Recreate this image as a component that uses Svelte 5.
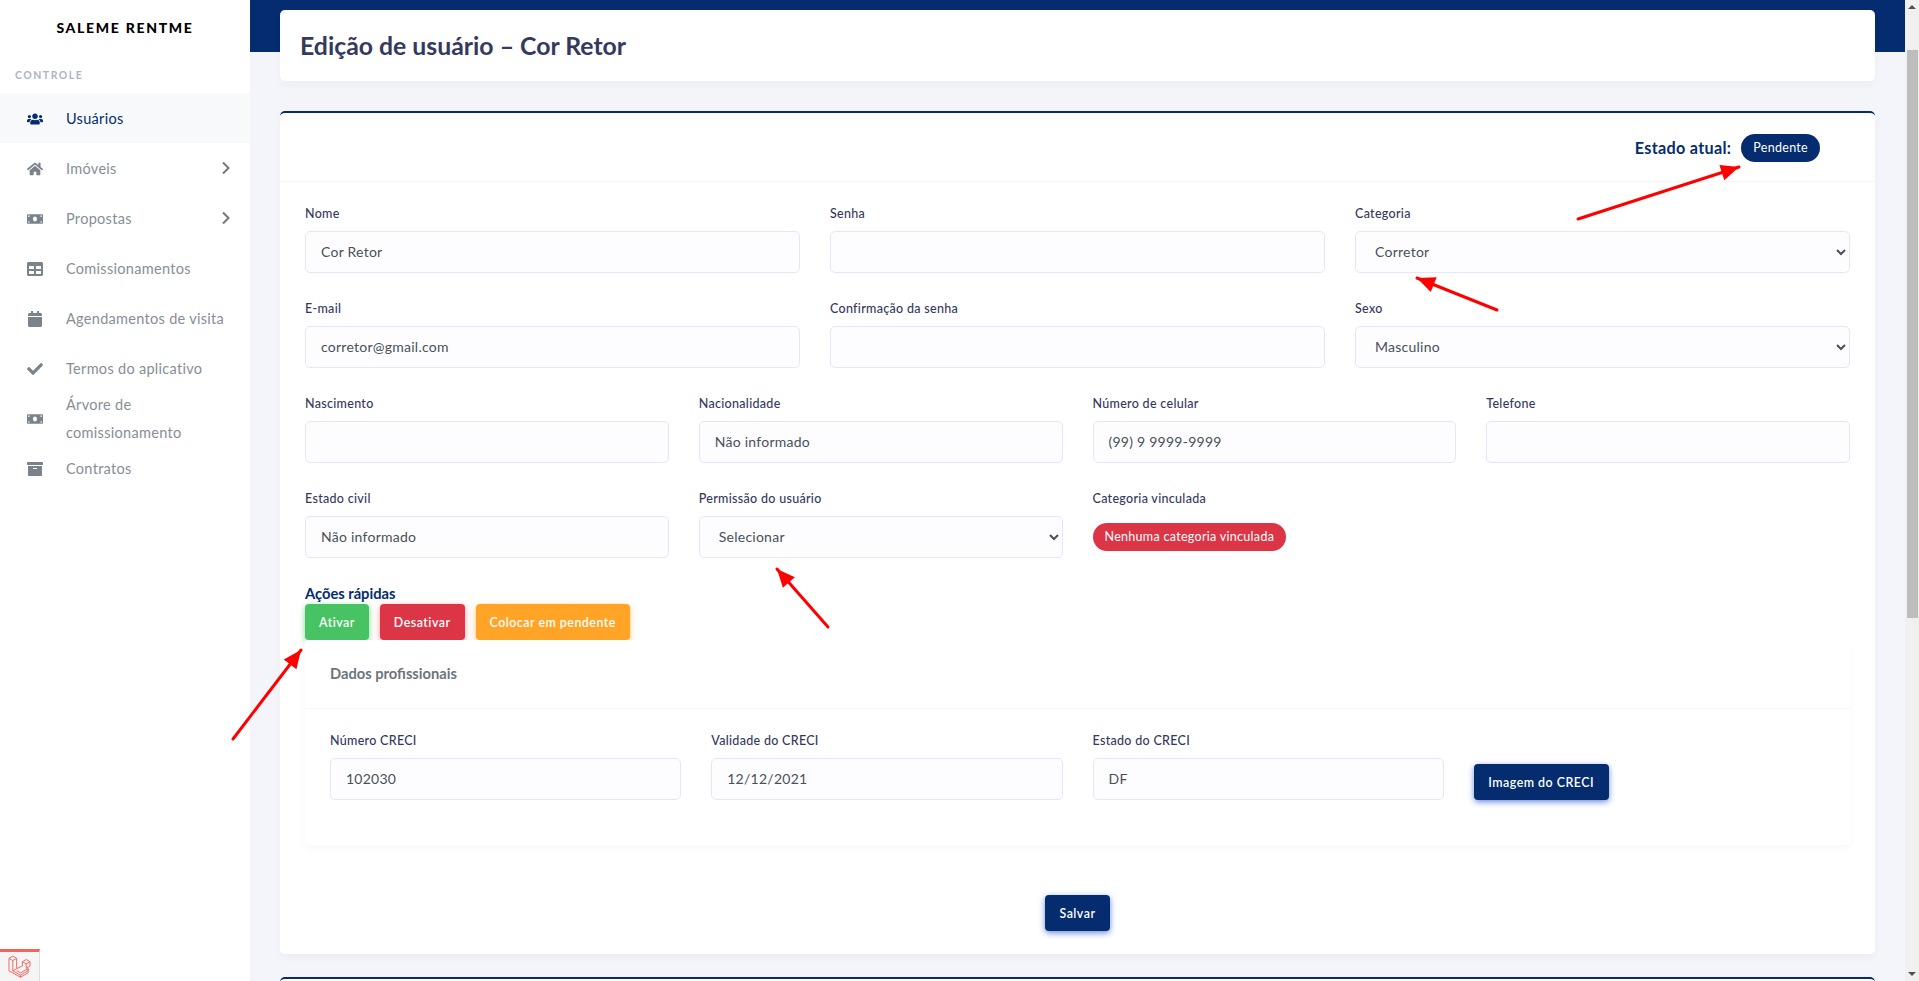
<script>
  const navIcons = {
    users: { box: '0 0 640 512', d: 'M96 224c35.3 0 64-28.7 64-64s-28.7-64-64-64-64 28.7-64 64 28.7 64 64 64zm448 0c35.3 0 64-28.7 64-64s-28.7-64-64-64-64 28.7-64 64 28.7 64 64 64zm32 32h-64c-17.6 0-33.5 7.1-45.1 18.6 40.3 22.1 68.9 62 75.1 109.4h66c17.7 0 32-14.3 32-32v-32c0-35.3-28.7-64-64-64zm-256 0c61.9 0 112-50.1 112-112S381.9 32 320 32 208 82.1 208 144s50.1 112 112 112zm76.8 32h-8.3c-20.8 10-43.9 16-68.5 16s-47.6-6-68.5-16h-8.3C179.6 288 128 339.6 128 403.2V432c0 26.5 21.5 48 48 48h288c26.5 0 48-21.5 48-48v-28.8c0-63.6-51.6-115.2-115.2-115.2zm-223.7-13.4C161.5 263.1 145.6 256 128 256H64c-35.3 0-64 28.7-64 64v32c0 17.7 14.3 32 32 32h65.9c6.3-47.4 34.9-87.3 75.2-109.4z' },
    home: { box: '0 0 576 512', d: 'M280.37 148.26L96 300.11V464a16 16 0 0 0 16 16l112.06-.29a16 16 0 0 0 15.92-16V368a16 16 0 0 1 16-16h64a16 16 0 0 1 16 16v95.64a16 16 0 0 0 16 16.05L464 480a16 16 0 0 0 16-16V300L295.67 148.26a12.19 12.19 0 0 0-15.3 0zM571.6 251.47L488 182.56V44.05a12 12 0 0 0-12-12h-56a12 12 0 0 0-12 12v72.61L318.47 43a48 48 0 0 0-61 0L4.34 251.47a12 12 0 0 0-1.6 16.9l25.5 31A12 12 0 0 0 45.15 301l235.22-193.74a12.19 12.19 0 0 1 15.3 0L530.9 301a12 12 0 0 0 16.9-1.6l25.5-31a12 12 0 0 0-1.7-16.93z' },
    money: { box: '0 0 640 512', d: 'M608 64H32C14.33 64 0 78.33 0 96v320c0 17.67 14.33 32 32 32h576c17.67 0 32-14.33 32-32V96c0-17.67-14.33-32-32-32zM48 400v-64c35.35 0 64 28.65 64 64H48zm0-224v-64h64c0 35.35-28.65 64-64 64zm272 176c-44.19 0-80-42.99-80-96 0-53.02 35.82-96 80-96s80 42.98 80 96c0 53.03-35.83 96-80 96zm272 48h-64c0-35.35 28.65-64 64-64v64zm0-224c-35.35 0-64-28.65-64-64h64v64z' },
    table: { box: '0 0 512 512', d: 'M464 32H48C21.49 32 0 53.49 0 80v352c0 26.51 21.49 48 48 48h416c26.51 0 48-21.49 48-48V80c0-26.51-21.49-48-48-48zM224 416H64v-96h160v96zm0-160H64v-96h160v96zm224 160H288v-96h160v96zm0-160H288v-96h160v96z' },
    calendar: { box: '0 0 448 512', d: 'M12 192h424c6.6 0 12 5.4 12 12v260c0 26.5-21.5 48-48 48H48c-26.5 0-48-21.5-48-48V204c0-6.6 5.4-12 12-12zm436-44v-36c0-26.5-21.5-48-48-48h-48V12c0-6.6-5.4-12-12-12h-40c-6.6 0-12 5.4-12 12v52H160V12c0-6.6-5.4-12-12-12h-40c-6.6 0-12 5.4-12 12v52H48C21.5 64 0 85.5 0 112v36c0 6.6 5.4 12 12 12h424c6.6 0 12-5.4 12-12z' },
    check: { box: '0 0 512 512', d: 'M173.898 439.404l-166.4-166.4c-9.997-9.997-9.997-26.206 0-36.204l36.203-36.204c9.997-9.998 26.207-9.998 36.204 0L192 312.69 432.095 72.596c9.997-9.997 26.207-9.997 36.204 0l36.203 36.204c9.997 9.997 9.997 26.206 0 36.204l-294.4 294.401c-9.998 9.997-26.207 9.997-36.204-.001z' },
    archive: { box: '0 0 512 512', d: 'M32 448c0 17.7 14.3 32 32 32h384c17.7 0 32-14.3 32-32V160H32v288zm160-212c0-6.6 5.4-12 12-12h104c6.6 0 12 5.4 12 12v8c0 6.6-5.4 12-12 12H204c-6.6 0-12-5.4-12-12v-8zM480 32H32C14.3 32 0 46.3 0 64v48c0 8.8 7.2 16 16 16h480c8.8 0 16-7.2 16-16V64c0-17.7-14.3-32-32-32z' }
  };

  const menu = [
    { label: 'Usuários', icon: 'users', active: true },
    { label: 'Imóveis', icon: 'home', sub: true },
    { label: 'Propostas', icon: 'money', sub: true },
    { label: 'Comissionamentos', icon: 'table' },
    { label: 'Agendamentos de visita', icon: 'calendar' },
    { label: 'Termos do aplicativo', icon: 'check' },
    { label: 'Árvore de comissionamento', icon: 'money' },
    { label: 'Contratos', icon: 'archive' }
  ];

  // red annotation arrows drawn over the screenshot: [fromX, fromY, tipX, tipY]
  const arrows = [
    [1578, 219, 1739, 167],
    [1497, 310, 1417, 278],
    [828, 627, 777, 569],
    [233, 739, 301, 650]
  ];

  const arrowHead = (a) => {
    const len = Math.hypot(a[2] - a[0], a[3] - a[1]);
    const ux = (a[2] - a[0]) / len;
    const uy = (a[3] - a[1]) / len;
    const bx = a[2] - ux * 18;
    const by = a[3] - uy * 18;
    return `${a[2]},${a[3]} ${bx - uy * 8},${by + ux * 8} ${bx + uy * 8},${by - ux * 8}`;
  };
</script>

<div class="page">
  <aside class="sidebar">
    <div class="brand">SALEME RENTME</div>
    <div class="section">CONTROLE</div>
    <nav>
      {#each menu as item}
        <div class="nav-item" class:active={item.active}>
          <svg class="nav-icon" viewBox={navIcons[item.icon].box}><path d={navIcons[item.icon].d} /></svg>
          <span class="nav-text">{item.label}</span>
          {#if item.sub}
            <svg class="chevron" viewBox="0 0 10 14"><path d="M2 1.5 7.5 7 2 12.5" /></svg>
          {/if}
        </div>
      {/each}
    </nav>
    <div class="debugbar">
      <svg viewBox="0 0 24 24" width="23" height="23">
        <path d="M1 3.500 5 1.200 9 3.500 5 5.800ZM1 3.500V16.500L13 23.200 21 18.600V14.200M9 3.500V14.200L5 16.500M5 5.800V16.500L13 21V23.200M13 21 21 16.400V14.200L13 18.700 9 16.300M9 14.200 15 11.500V7L19 4.700 23 7V11.500L19 13.800V14.200M15 7 19 9.300 23 7M19 9.300V13.800" />
      </svg>
    </div>
  </aside>

  <main class="content">
    <div class="band"></div>
    <div class="stack">
      <section class="card title-card">
        <h1>Edição de usuário – Cor Retor</h1>
      </section>

      <section class="card form-card">
        <header class="status">
          <strong>Estado atual:</strong>
          <span class="pill navy">Pendente</span>
        </header>

        <form class="form">
          <div class="grid three">
            <label class="field"><span>Nome</span><input value="Cor Retor" /></label>
            <label class="field"><span>Senha</span><input type="password" /></label>
            <label class="field"><span>Categoria</span><select><option>Corretor</option></select></label>
            <label class="field"><span>E-mail</span><input value="corretor@gmail.com" /></label>
            <label class="field"><span>Confirmação da senha</span><input type="password" /></label>
            <label class="field"><span>Sexo</span><select><option>Masculino</option></select></label>
          </div>

          <div class="grid four">
            <label class="field"><span>Nascimento</span><input /></label>
            <label class="field"><span>Nacionalidade</span><input value="Não informado" /></label>
            <label class="field"><span>Número de celular</span><input value="(99) 9 9999-9999" /></label>
            <label class="field"><span>Telefone</span><input /></label>
            <label class="field"><span>Estado civil</span><input value="Não informado" /></label>
            <label class="field"><span>Permissão do usuário</span><select><option>Selecionar</option></select></label>
            <div class="field">
              <span>Categoria vinculada</span>
              <div class="pill-row"><span class="pill red">Nenhuma categoria vinculada</span></div>
            </div>
          </div>

          <h4>Ações rápidas</h4>
          <div class="actions">
            <button type="button" class="btn green">Ativar</button>
            <button type="button" class="btn red">Desativar</button>
            <button type="button" class="btn orange">Colocar em pendente</button>
          </div>

          <section class="inner">
            <h5>Dados profissionais</h5>
            <div class="grid four inner-body">
              <label class="field"><span>Número CRECI</span><input value="102030" /></label>
              <label class="field"><span>Validade do CRECI</span><input value="12/12/2021" /></label>
              <label class="field"><span>Estado do CRECI</span><input value="DF" /></label>
              <div class="creci-btn"><button type="button" class="btn navy-btn">Imagem do CRECI</button></div>
            </div>
          </section>

          <div class="save"><button type="button" class="btn navy-btn">Salvar</button></div>
        </form>
      </section>

      <section class="card next-card"></section>
    </div>
  </main>

  <div class="scrollbar">
    <i class="up"></i>
    <div class="thumb"></div>
    <i class="down"></i>
  </div>

  <svg class="annotations" viewBox="0 0 1919 981" width="1919" height="981">
    {#each arrows as a}
      <line x1={a[0]} y1={a[1]} x2={a[2]} y2={a[3]} />
      <polygon points={arrowHead(a)} />
    {/each}
  </svg>
</div>

<style>
  :global(body) {
    margin: 0;
    overflow: hidden;
  }

  .page {
    position: relative;
    display: flex;
    width: 1919px;
    height: 981px;
    overflow: hidden;
    background: #f4f5fa;
    color: #6c757d;
    font-family: Lato, "Noto Sans", sans-serif;
    font-size: 14px;
  }

  /* sidebar */
  .sidebar {
    position: relative;
    flex: 0 0 250px;
    background: #fff;
  }

  .brand {
    margin-top: 19px;
    line-height: 18px;
    text-align: center;
    color: #000;
    font-size: 14px;
    font-weight: 900;
    letter-spacing: 1.7px;
  }

  .section {
    margin: 29px 0 0 15px;
    line-height: 18px;
    height: 18px;
    color: #adb5bd;
    font-size: 10.5px;
    font-weight: 700;
    letter-spacing: 1.5px;
  }

  nav {
    margin-top: 9px;
  }

  .nav-item {
    display: flex;
    align-items: center;
    height: 50px;
    padding-left: 27px;
    color: #868e96;
    font-size: 14.5px;
    letter-spacing: 0.3px;
  }

  .nav-item.active {
    background: #f8f9fb;
    color: #042c6f;
  }

  .nav-icon {
    flex: 0 0 16px;
    width: 16px;
    height: 16px;
    margin: 2px 23px 0 0;
    fill: #7a838c;
  }

  .active .nav-icon {
    fill: #042c6f;
  }

  .nav-text {
    flex: 0 0 165px;
    margin-top: 2px;
    line-height: 28px;
  }

  .chevron {
    width: 10px;
    height: 14px;
    margin: -1px 0 0 -10px;
    fill: none;
    stroke: #6f7880;
    stroke-width: 2;
  }

  .debugbar {
    position: absolute;
    left: 0;
    bottom: 0;
    box-sizing: border-box;
    width: 40px;
    height: 32px;
    padding: 3px 0 0 8px;
    background: #f5f5f5;
    border-top: 3px solid #f4645f;
    border-right: 1px solid #ddd;
  }

  .debugbar svg {
    fill: none;
    stroke: #f4645f;
    stroke-width: 1;
  }

  /* main column */
  .content {
    position: relative;
    flex: 1;
    min-width: 0;
  }

  .band {
    height: 52px;
    background: #042c6f;
  }

  .stack {
    display: flex;
    flex-direction: column;
    gap: 30px;
    margin-top: -42px;
    padding: 0 30px;
    position: relative;
  }

  .card {
    background: #fff;
    border-radius: 5px;
    box-shadow: 0 4px 8px rgba(26, 36, 80, 0.03);
  }

  .title-card {
    height: 71px;
    display: flex;
    align-items: center;
    padding-left: 20px;
  }

  h1 {
    margin: 0;
    color: #34395e;
    font-size: 24.8px;
    font-weight: 700;
  }

  .form-card {
    height: 841px;
    border-top: 2px solid #042c6f;
  }

  .status {
    box-sizing: border-box;
    height: 69px;
    padding: 21px 55px 0 0;
    display: flex;
    justify-content: flex-end;
    align-items: flex-start;
    gap: 10px;
    border-bottom: 1px solid #f6f6f9;
  }

  .status strong {
    color: #042c6f;
    font-size: 16.2px;
    line-height: 28px;
    letter-spacing: 0.3px;
  }

  .pill {
    display: inline-block;
    border-radius: 14px;
    line-height: 28px;
    color: #fff;
    font-size: 12.5px;
    letter-spacing: 0.3px;
    padding: 0 12px;
  }

  .pill.navy {
    background: #042c6f;
  }

  .pill.red {
    background: #dc3545;
  }

  .form {
    padding: 19px 25px 0;
  }

  .grid {
    display: grid;
    column-gap: 30px;
  }

  .three {
    grid-template-columns: repeat(3, 1fr);
  }

  .four {
    grid-template-columns: repeat(4, 1fr);
  }

  .field {
    display: block;
    height: 95px;
  }

  .field > span:first-child {
    display: block;
    height: 30px;
    line-height: 26px;
    color: #34395e;
    font-size: 12.5px;
    font-weight: 500;
    letter-spacing: 0.3px;
  }

  input,
  select {
    box-sizing: border-box;
    display: block;
    width: 100%;
    height: 42px;
    padding: 0 15px 2px;
    background-color: #fdfdff;
    border: 1px solid #e4e6fc;
    border-radius: 5px;
    color: #495057;
    font: inherit;
    font-size: 14px;
    letter-spacing: 0.25px;
    outline: none;
  }

  .pill-row {
    padding-top: 7px;
  }

  h4 {
    margin: 0;
    height: 22px;
    line-height: 22px;
    margin-top: 1px;
    color: #042c6f;
    font-size: 14.7px;
    font-weight: 700;
  }

  .actions {
    display: flex;
    gap: 11px;
    height: 36px;
  }

  .btn {
    height: 36px;
    padding: 0 14px;
    border: 0;
    border-radius: 4px;
    color: #fff;
    font: inherit;
    font-size: 12.4px;
    font-weight: 600;
    letter-spacing: 0.5px;
  }

  .btn.green {
    background: #47c363;
    box-shadow: 0 2px 6px #81d694;
  }

  .btn.red {
    background: #dc3545;
    box-shadow: 0 2px 6px #fd9b96;
  }

  .btn.orange {
    background: #ffa426;
    box-shadow: 0 2px 6px #ffc473;
  }

  .btn.navy-btn {
    padding: 0 14.5px;
    background: #042c6f;
    box-shadow: 0 2px 6px #6a8bd8;
  }

  .inner {
    position: relative;
    height: 205px;
    border-radius: 3px;
    background: #fff;
    box-shadow: 0 4px 8px rgba(26, 36, 80, 0.03);
  }

  h5 {
    box-sizing: border-box;
    margin: 0;
    height: 69px;
    padding: 23px 25px 0;
    line-height: 20px;
    color: #6c757d;
    font-size: 14.7px;
    font-weight: 700;
    border-bottom: 1px solid #f6f6f9;
  }

  .inner-body {
    padding: 19px 25px 0;
  }

  .creci-btn {
    padding-top: 36px;
  }

  .save {
    display: flex;
    justify-content: center;
    margin-top: 50px;
  }

  .next-card {
    height: 60px;
    margin-top: -7px;
    border-top: 2px solid #042c6f;
  }

  /* scrollbar stand-in, the real one is hidden in the capture */
  .scrollbar {
    position: relative;
    flex: 0 0 14px;
    background: #f0f0f0;
  }

  .thumb {
    position: absolute;
    top: 50px;
    left: 2px;
    right: 1px;
    height: 568px;
    background: #bdbdbd;
  }

  .up,
  .down {
    position: absolute;
    left: 3px;
    width: 0;
    height: 0;
    border-left: 4px solid transparent;
    border-right: 4px solid transparent;
  }

  .up {
    top: 5px;
    border-bottom: 4px solid #505050;
  }

  .down {
    bottom: 5px;
    border-top: 4px solid #505050;
  }

  .annotations {
    position: absolute;
    top: 0;
    left: 0;
    pointer-events: none;
  }

  .annotations line {
    stroke: #ff0000;
    stroke-width: 3;
    stroke-linecap: round;
  }

  .annotations polygon {
    fill: #ff0000;
  }
</style>
